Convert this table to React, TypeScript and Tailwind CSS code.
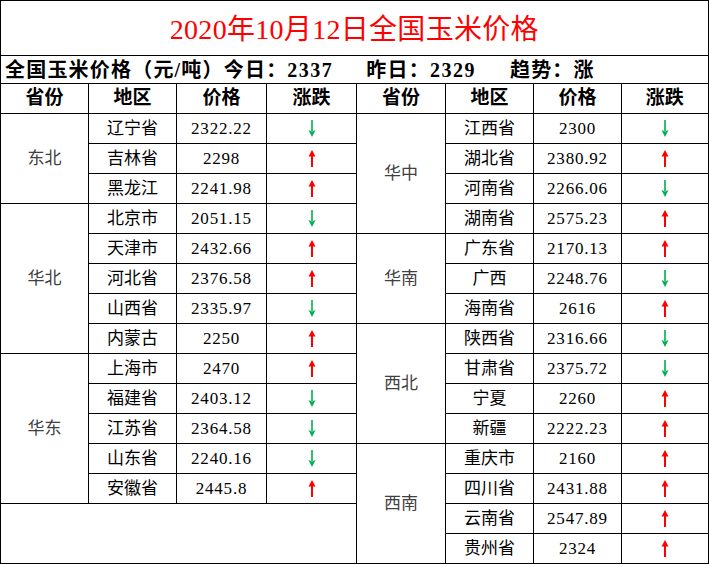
import React from "react";

type Row = { name: string; price: string; up: boolean };

const left: Row[] = [
  { name: "辽宁省", price: "2322.22", up: false },
  { name: "吉林省", price: "2298", up: true },
  { name: "黑龙江", price: "2241.98", up: true },
  { name: "北京市", price: "2051.15", up: false },
  { name: "天津市", price: "2432.66", up: true },
  { name: "河北省", price: "2376.58", up: true },
  { name: "山西省", price: "2335.97", up: false },
  { name: "内蒙古", price: "2250", up: true },
  { name: "上海市", price: "2470", up: true },
  { name: "福建省", price: "2403.12", up: false },
  { name: "江苏省", price: "2364.58", up: false },
  { name: "山东省", price: "2240.16", up: false },
  { name: "安徽省", price: "2445.8", up: true },
];

const right: Row[] = [
  { name: "江西省", price: "2300", up: false },
  { name: "湖北省", price: "2380.92", up: true },
  { name: "河南省", price: "2266.06", up: false },
  { name: "湖南省", price: "2575.23", up: true },
  { name: "广东省", price: "2170.13", up: true },
  { name: "广西", price: "2248.76", up: false },
  { name: "海南省", price: "2616", up: true },
  { name: "陕西省", price: "2316.66", up: false },
  { name: "甘肃省", price: "2375.72", up: false },
  { name: "宁夏", price: "2260", up: true },
  { name: "新疆", price: "2222.23", up: true },
  { name: "重庆市", price: "2160", up: true },
  { name: "四川省", price: "2431.88", up: true },
  { name: "云南省", price: "2547.89", up: true },
  { name: "贵州省", price: "2324", up: true },
];

// area label starts: row index -> [label, span]
const leftAreas: Record<number, [string, number]> = {
  0: ["东北", 3],
  3: ["华北", 5],
  8: ["华东", 5],
};
const rightAreas: Record<number, [string, number]> = {
  0: ["华中", 4],
  4: ["华南", 3],
  7: ["西北", 4],
  11: ["西南", 4],
};

function Arrow({ up }: { up: boolean }) {
  if (up) {
    return (
      <svg width="8" height="17" viewBox="0 0 8 17" className="mx-auto block">
        <polygon points="4,0 7.5,6.5 0.5,6.5" fill="#ff0000" />
        <rect x="3" y="5" width="2" height="12" fill="#ff0000" />
      </svg>
    );
  }
  return (
    <svg width="8" height="17" viewBox="0 0 8 17" className="mx-auto block">
      <rect x="3.2" y="0" width="1.6" height="11" fill="#00b050" />
      <polygon points="0.5,10 4,11.5 7.5,10 4,17" fill="#00b050" />
    </svg>
  );
}

const cell = "border border-black p-0 text-center align-middle";
const serif = "font-['Liberation_Serif','Noto_Sans_CJK_SC',serif]";

function DataCells({ r }: { r: Row }) {
  return (
    <>
      <td className={`${cell} text-[17px]`}>{r.name}</td>
      <td className={`${cell} text-[17px] tracking-[0.8px]`}>{r.price}</td>
      <td className={cell}>
        <Arrow up={r.up} />
      </td>
    </>
  );
}

export default function App() {
  const rows = Array.from({ length: 15 }, (_, i) => i);
  return (
    <div className={`w-[709px] h-[564px] bg-white text-black ${serif}`}>
      <table className="table-fixed border-collapse w-[708px] border-r-2 border-b-2 border-black">
        <colgroup>
          <col className="w-[88px]" />
          <col className="w-[88px]" />
          <col className="w-[90px]" />
          <col className="w-[90px]" />
          <col className="w-[89px]" />
          <col className="w-[88px]" />
          <col className="w-[88px]" />
          <col className="w-[87px]" />
        </colgroup>
        <tbody>
          <tr className="h-[55px]">
            <td colSpan={8} className={`${cell} text-[28px] tracking-[0.3px] text-[#ff0000] pt-1`}>
              2020年10月12日全国玉米价格
            </td>
          </tr>
          <tr className="h-[28px]">
            <td colSpan={8} className={`${cell} text-left pl-[4px] text-[20px] font-bold leading-none whitespace-nowrap`}>
              <span className="tracking-[1.2px]">全国玉米价格（元/吨）今日：</span>
              <span className="tracking-[1.5px]">2337</span>
              <span className="ml-[33px] tracking-[1.2px]">昨日：</span>
              <span className="tracking-[1.5px]">2329</span>
              <span className="ml-[34px] tracking-[1.2px]">趋势：涨</span>
            </td>
          </tr>
          <tr className="h-[30px]">
            {["省份", "地区", "价格", "涨跌", "省份", "地区", "价格", "涨跌"].map((h, i) => (
              <td key={i} className={`${cell} text-[19px] font-bold`}>
                {h}
              </td>
            ))}
          </tr>
          {rows.map((i) => (
            <tr key={i} className="h-[30px]">
              {leftAreas[i] && (
                <td rowSpan={leftAreas[i][1]} className={`${cell} text-[17px] text-[#404040]`}>
                  {leftAreas[i][0]}
                </td>
              )}
              {i < 13 && <DataCells r={left[i]} />}
              {i === 13 && <td colSpan={4} rowSpan={2} className={cell}></td>}
              {rightAreas[i] && (
                <td rowSpan={rightAreas[i][1]} className={`${cell} text-[17px] text-[#404040]`}>
                  {rightAreas[i][0]}
                </td>
              )}
              <DataCells r={right[i]} />
            </tr>
          ))}
        </tbody>
      </table>
    </div>
  );
}
